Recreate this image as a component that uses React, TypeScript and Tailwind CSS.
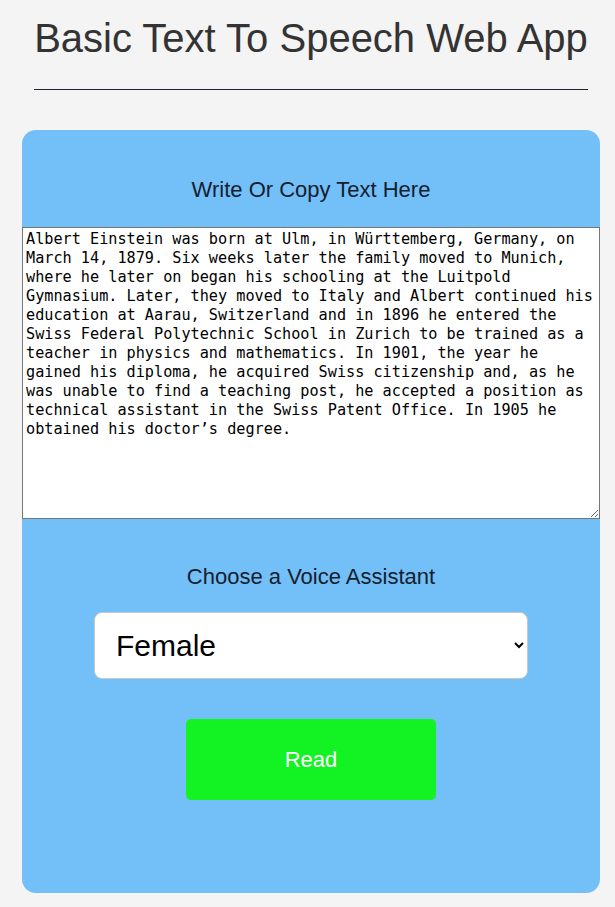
import { useState } from "react";

const sampleText =
  "Albert Einstein was born at Ulm, in Württemberg, Germany, on March 14, 1879. Six weeks later the family moved to Munich, where he later on began his schooling at the Luitpold Gymnasium. Later, they moved to Italy and Albert continued his education at Aarau, Switzerland and in 1896 he entered the Swiss Federal Polytechnic School in Zurich to be trained as a teacher in physics and mathematics. In 1901, the year he gained his diploma, he acquired Swiss citizenship and, as he was unable to find a teaching post, he accepted a position as technical assistant in the Swiss Patent Office. In 1905 he obtained his doctor’s degree.";

export default function App() {
  const [text, setText] = useState(sampleText);
  const [voice, setVoice] = useState("female");

  return (
    <div className="min-h-screen bg-[#f4f4f4] pl-[22px] pr-[15px] pb-[14px] font-['Liberation_Sans',Arial,sans-serif]">
      {/* Header */}
      <h1 className="pt-[18px] text-center text-[40px] leading-[40px] font-normal text-[#333333]">
        Basic Text To Speech Web App
      </h1>
      <hr className="mx-[12px] mt-[31px] border-t border-[#1e2430]" />

      {/* Card */}
      <div className="mt-[40px] flex flex-col items-center rounded-[14px] bg-[#73bff8] pt-[47px] pb-[93px]">
        <label className="text-[22px] leading-[26px] text-[#15202e]">
          Write Or Copy Text Here
        </label>
        <textarea
          value={text}
          onChange={(e) => setText(e.target.value)}
          spellCheck={false}
          className="mt-[24px] h-[292px] w-full resize-y border border-[#767676] bg-white pt-[2px] pl-[3px] pr-[2px] text-[15.2px] leading-[19px] text-black font-['DejaVu_Sans_Mono',monospace] outline-none"
        />

        <label className="mt-[45px] text-[22px] leading-[26px] text-[#15202e]">
          Choose a Voice Assistant
        </label>
        <select
          value={voice}
          onChange={(e) => setVoice(e.target.value)}
          className="mt-[22px] h-[67px] w-[434px] rounded-[8px] border border-[#c8c8c8] bg-white pl-[17px] pr-[8px] text-[30px] text-black"
        >
          <option value="female">Female</option>
          <option value="male">Male</option>
        </select>

        <button className="mt-[40px] h-[81px] w-[250px] rounded-[5px] bg-[#13f222] text-[22px] text-white">
          Read
        </button>
      </div>
    </div>
  );
}
